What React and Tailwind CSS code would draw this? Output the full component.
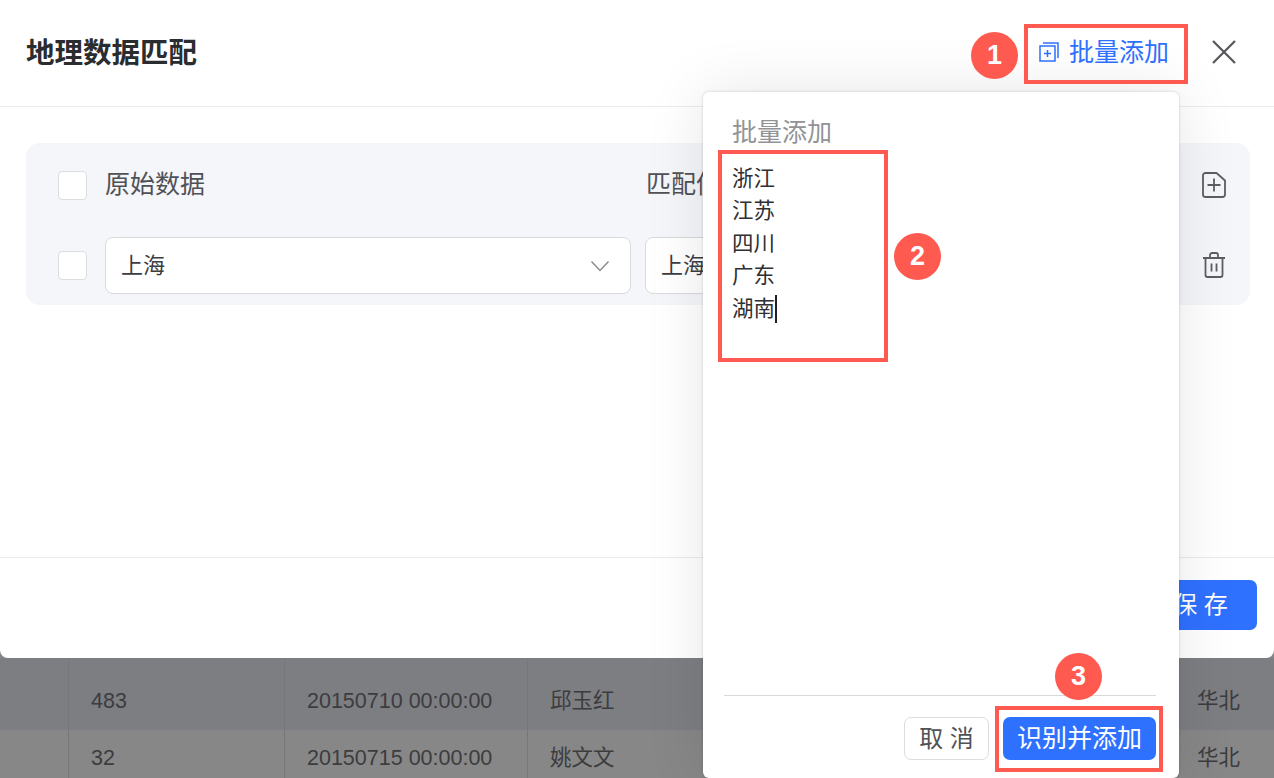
const font = { fontFamily: '"Liberation Sans","Noto Sans CJK SC",sans-serif' };

function Checkbox() {
  return <div className="h-[29px] w-[29px] shrink-0 rounded-[4px] border border-[#dcdde0] bg-white" />;
}

function Select({ className, chevron }) {
  return (
    <div className={"flex h-[57px] items-center justify-between rounded-[8px] border border-[#d9dadd] bg-white pl-[15px] pr-[20px] text-[22px] text-[#3b3d42] " + className}>
      <span>上海</span>
      {chevron && (
        <svg width="20" height="12" viewBox="0 0 20 12" fill="none" stroke="#8a8c90" strokeWidth="1.5">
          <path d="M1.5 1.5 10 10.5 18.5 1.5" />
        </svg>
      )}
    </div>
  );
}

function Row({ id, date, name, className, cell }) {
  return (
    <div className={"flex shrink-0 text-[21.5px] text-[#3c3c3e] " + className}>
      <div className="h-full w-[69px] border-r border-[#76777a]" />
      <div className={"flex h-full w-[216px] items-center border-r border-[#76777a] pl-[22px] " + cell}>{id}</div>
      <div className={"flex h-full w-[243px] items-center border-r border-[#76777a] pl-[22px] " + cell}>{date}</div>
      <div className={"flex h-full flex-1 items-center pl-[22px] " + cell}>{name}</div>
      <div className={"flex h-full w-[77px] items-center " + cell}>华北</div>
    </div>
  );
}

function Badge({ n, className }) {
  return (
    <div className={"absolute flex h-[47px] w-[47px] items-center justify-center rounded-full bg-[#ff5a4f] text-[27px] font-bold text-white " + className}>
      {n}
    </div>
  );
}

export default function App() {
  return (
    <div className="relative flex h-[778px] w-[1274px] flex-col overflow-hidden bg-[#858688]" style={font}>
      {/* dialog */}
      <div className="flex h-[658px] shrink-0 flex-col rounded-b-[8px] bg-white">
        <header className="flex h-[107px] shrink-0 items-start justify-between border-b border-[#ebebed] pl-[26px] pr-[37px] pt-[35px]">
          <h1 className="text-[28.5px] font-bold leading-[36px] text-[#2b2c2f]">地理数据匹配</h1>
          <div className="flex items-center">
            <svg width="20" height="20" viewBox="0 0 20 20" fill="none" stroke="#2f71ff" strokeWidth="1.5" className="mr-[10px] -mt-[1px]">
              <rect x="1" y="4" width="15" height="15" />
              <path d="M4 1h15v15" />
              <path d="M5 11.5h7M8.5 8v7" />
            </svg>
            <span className="-mt-[1px] text-[25px] leading-[36px] text-[#2f71ff]">批量添加</span>
            <svg width="26" height="26" viewBox="0 0 26 26" fill="none" stroke="#555659" strokeWidth="2.2" className="-mt-[1px] ml-[42px]">
              <path d="M2 2 24 24M24 2 2 24" />
            </svg>
          </div>
        </header>

        <main className="flex-1 pl-[26px] pr-[24px] pt-[36px]">
          <div className="flex h-[162px] flex-col rounded-[14px] bg-[#f5f6fa] pl-[32px] pr-[24px]">
            <div className="flex h-[84px] shrink-0 items-center text-[25px] text-[#4f5156]">
              <Checkbox />
              <span className="ml-[18px] w-[541px]">原始数据</span>
              <span className="flex-1">匹配值</span>
              <svg width="24" height="26" viewBox="0 0 24 26" fill="none" stroke="#5c5e63" strokeWidth="1.8" strokeLinejoin="round">
                <path d="M3.5 1h11L23 8.5V22.5a2.5 2.5 0 0 1-2.5 2.5h-17A2.5 2.5 0 0 1 1 22.5V3.5A2.5 2.5 0 0 1 3.5 1Z" />
                <path d="M5.5 13h13M12 6.5v13" />
              </svg>
            </div>
            <div className="mt-[10px] flex h-[57px] shrink-0 items-center">
              <Checkbox />
              <Select chevron className="ml-[18px] w-[526px]" />
              <Select className="ml-[14px] flex-1" />
              <svg width="24" height="26" viewBox="0 0 24 26" fill="none" stroke="#5c5e63" strokeWidth="1.8" className="ml-[33px] -mt-[1px]">
                <path d="M1 6h22M8 6V3a2 2 0 0 1 2-2h4a2 2 0 0 1 2 2v3" />
                <path d="M3.5 6v17a2 2 0 0 0 2 2h13a2 2 0 0 0 2-2V6" />
                <path d="M9.5 11.5v8M14.5 11.5v8" />
              </svg>
            </div>
          </div>
        </main>

        <footer className="flex h-[101px] shrink-0 items-start justify-end border-t border-[#ebebed] pr-[17px] pt-[22px]">
          <button className="h-[50px] w-[107px] rounded-[7px] bg-[#2f71ff] pr-[6px] text-[24px] text-white">保 存</button>
        </footer>
      </div>

      {/* page behind the mask */}
      <div className="flex flex-1 flex-col overflow-hidden bg-[#7d7e82]">
        <Row id="483" date="20150710 00:00:00" name="邱玉红" className="h-[72px] bg-[#7d7e82]" cell="pt-[15px]" />
        <Row id="32" date="20150715 00:00:00" name="姚文文" className="h-[54px] bg-[#878787]" cell="pt-[2px]" />
      </div>

      {/* popover */}
      <div className="absolute left-[703px] top-[92px] flex h-[686px] w-[476px] flex-col rounded-[6px] bg-white pl-[21px] pr-[23px] pt-[23px] shadow-[0_0_60px_rgba(0,0,0,0.1),0_0_3px_rgba(0,0,0,0.18)]">
        <div className="pl-[8px] text-[25px] leading-[34px] text-[#929396]">批量添加</div>
        <div className="mt-[14px] flex-1 pl-[8px] text-[21.5px] leading-[32.4px] text-[#2f3033]">
          <div>浙江</div>
          <div>江苏</div>
          <div>四川</div>
          <div>广东</div>
          <div className="flex items-stretch">
            湖南
            <span className="my-[2px] w-[2px] bg-[#1f2023]" />
          </div>
        </div>
        <div className="flex h-[83px] shrink-0 items-start justify-end gap-[14px] border-t border-[#d9d9dc] pt-[21px]">
          <button className="h-[43px] w-[85px] rounded-[7px] border border-[#dcdde0] bg-white text-[24px] leading-none text-[#505256]">取 消</button>
          <button className="h-[43px] w-[153px] rounded-[7px] bg-[#2f71ff] text-[25px] leading-none text-white">识别并添加</button>
        </div>
      </div>

      {/* annotations */}
      <div className="absolute left-[1024px] top-[24px] h-[60px] w-[164px] border-[4px] border-[#ff5a4f]" />
      <div className="absolute left-[718px] top-[150px] h-[212px] w-[170px] border-[4px] border-[#ff5a4f]" />
      <div className="absolute left-[995px] top-[706px] h-[66px] w-[168px] border-[4px] border-[#ff5a4f]" />
      <Badge n="1" className="left-[971px] top-[32px]" />
      <Badge n="2" className="left-[894px] top-[233px]" />
      <Badge n="3" className="left-[1055px] top-[653px]" />
    </div>
  );
}
